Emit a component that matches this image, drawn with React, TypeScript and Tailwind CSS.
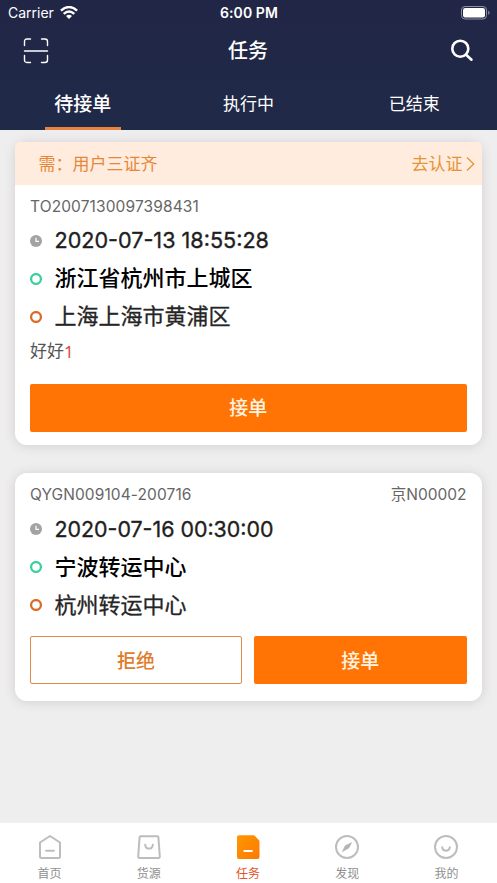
import React from 'react';

const ScanIcon = () => (
  <svg width="26" height="26" viewBox="0 0 26 26" fill="none" stroke="#fff" strokeWidth="1.4" strokeLinecap="round">
    <path d="M1.500 7.500V3.500Q1.500 1 4 1H7.500M18.500 1h3.500Q24.500 1 24.500 3.500V7.500M24.500 17.500v4.500Q24.500 24.500 22 24.500H18.500M7.500 24.500H4Q1.500 24.500 1.500 22V17.500M1.500 13h23" />
  </svg>
);

const SearchIcon = () => (
  <svg width="24" height="24" viewBox="0 0 24 24" fill="none" stroke="#fff" strokeWidth="2.6" strokeLinecap="round">
    <circle cx="10.300" cy="9.700" r="8" />
    <path d="M16.100 15.800L21.500 20.700" />
  </svg>
);

const WifiIcon = () => (
  <svg width="18" height="14" viewBox="0 0 18 14" fill="none" stroke="#fff" strokeWidth="2.400">
    <path d="M0.900 4.700Q9 -2.600 17.100 4.700M3.700 7.900Q9 3.200 14.300 7.900" />
    <path d="M9 13L6 10.100Q9 7.600 12 10.100Z" fill="#fff" stroke="none" />
  </svg>
);

const BatteryIcon = () => (
  <svg width="29" height="14" viewBox="0 0 29 14">
    <rect x="0.500" y="0.500" width="25" height="12.500" rx="3.500" fill="none" stroke="#8d90a4" />
    <rect x="2" y="2" width="22" height="9.500" rx="2.200" fill="#fff" />
    <path d="M27.200 4.800Q28.600 5.500 28.600 6.800Q28.600 8.100 27.200 8.800Z" fill="#8d90a4" />
  </svg>
);

const ClockIcon = () => (
  <svg width="12" height="12" viewBox="0 0 12 12">
    <circle cx="6" cy="6" r="6" fill="#a3a3a3" />
    <path d="M6 2.800V6.300H9" fill="none" stroke="#fff" strokeWidth="1.200" />
  </svg>
);

const Ring = ({ color }: { color: string }) => (
  <svg width="12" height="12" viewBox="0 0 12 12">
    <circle cx="6" cy="6" r="4.900" fill="none" stroke={color} strokeWidth="2.300" />
  </svg>
);

const HomeIcon = () => (
  <svg width="24" height="26" viewBox="0 0 24 26" fill="none" stroke="#bdbdbd" strokeWidth="2" strokeLinejoin="round" strokeLinecap="round">
    <path d="M2 8.500L12 2L22 8.500V22.500Q22 24 20.500 24H3.500Q2 24 2 22.500Z" />
    <path d="M8.200 16.800h7.600" />
  </svg>
);

const GoodsIcon = () => (
  <svg width="24" height="26" viewBox="0 0 24 26" fill="none" stroke="#bdbdbd" strokeWidth="2" strokeLinejoin="round" strokeLinecap="round">
    <path d="M3.500 2.300H20.500Q21.300 2.300 21.400 3.100L22.800 22.600Q22.900 24 21.500 24H2.500Q1.100 24 1.200 22.600L2.600 3.100Q2.700 2.300 3.500 2.300Z" />
    <path d="M8.200 10.800Q8.600 14.600 12 14.600T15.800 10.800" />
  </svg>
);

const TaskIcon = () => (
  <svg width="24" height="26" viewBox="0 0 24 26">
    <defs>
      <linearGradient id="task" x1="0" y1="0" x2="1" y2="1">
        <stop offset="0" stopColor="#ff9700" />
        <stop offset="1" stopColor="#fb7b04" />
      </linearGradient>
    </defs>
    <path d="M3 1.300H17.500Q18.300 1.300 19 2L22.800 5.900Q23.500 6.600 23.500 7.500V23Q23.500 25 21.500 25H3Q1 25 1 23V3.300Q1 1.300 3 1.300Z" fill="url(#task)" />
    <path d="M8.300 17h7.600" stroke="#fff" strokeWidth="1.900" strokeLinecap="round" />
  </svg>
);

const FindIcon = () => (
  <svg width="24" height="26" viewBox="0 0 24 26">
    <circle cx="12" cy="13" r="11" fill="none" stroke="#bdbdbd" strokeWidth="2" />
    <path d="M17.300 7.900L14 14.300L6.800 18.300L10 11.600Z" fill="#b5b5b5" />
  </svg>
);

const MineIcon = () => (
  <svg width="24" height="26" viewBox="0 0 24 26" fill="none" stroke="#bdbdbd" strokeWidth="2" strokeLinecap="round">
    <circle cx="12" cy="13" r="11" />
    <path d="M8.200 13.300Q8.800 16.800 12 16.800T15.800 13.300" />
  </svg>
);

const Row = ({ icon, className, children }: { icon: React.ReactNode; className: string; children: React.ReactNode }) => (
  <div className="flex h-[38px] items-center gap-[12.500px]">
    {icon}
    <span className={`whitespace-nowrap ${className}`}>{children}</span>
  </div>
);

const navItems = [
  { label: '首页', icon: <HomeIcon /> },
  { label: '货源', icon: <GoodsIcon /> },
  { label: '任务', icon: <TaskIcon />, active: true },
  { label: '发现', icon: <FindIcon /> },
  { label: '我的', icon: <MineIcon /> },
];

export default function App() {
  return (
    <div className="flex h-[883px] w-[497px] flex-col overflow-hidden bg-[#efeeef] font-['Inter','Noto_Sans_CJK_SC',sans-serif]">
      <header className="flex h-[129.500px] shrink-0 flex-col bg-linear-to-b from-[#222646] to-[#1f2a48] text-white">
        <div className="grid h-[25px] grid-cols-3 items-center pl-[8px] pr-[7px]">
          <div className="flex items-center gap-[6px] text-[14px]">
            <span>Carrier</span>
            <WifiIcon />
          </div>
          <div className="text-center text-[14px] font-semibold tracking-[0.100px]">6:00 PM</div>
          <div className="flex justify-end">
            <BatteryIcon />
          </div>
        </div>
        <div className="flex h-[51px] items-center justify-between px-[23px] pt-px">
          <ScanIcon />
          <h1 className="pr-[3px] text-[20px] font-medium leading-[50px]">任务</h1>
          <SearchIcon />
        </div>
        <nav className="grid h-[53.500px] grid-cols-3 text-center text-[17px] leading-[56px]">
          <div className="flex flex-col items-center">
            <span className="h-[51px] text-[19px] font-medium leading-[57px]">待接单</span>
            <span className="h-[3px] w-[76px] bg-[#e88440]" />
          </div>
          <span>执行中</span>
          <span>已结束</span>
        </nav>
      </header>

      <main className="flex flex-1 flex-col gap-[28px] px-[15px] pt-[12.500px]">
        <section className="h-[303px] w-[466.500px] rounded-[12px] bg-white shadow-[0_1px_12px_rgba(60,40,50,0.16)]">
          <div className="flex h-[42.500px] items-center justify-between rounded-t-[5px] bg-[#ffecdf] pl-[23.500px] pr-[7px] pt-[2px] text-[17px] text-[#e78736]">
            <span>需：用户三证齐</span>
            <span className="flex items-center gap-[3px] text-[#e39435]">
              去认证
              <svg width="9" height="15" viewBox="0 0 9 15" fill="none" stroke="#e39435" strokeWidth="1.300">
                <path d="M1 0.500L7.700 7L1 13.500" />
              </svg>
            </span>
          </div>
          <div className="px-[15px]">
            <div className="flex h-[37px] items-center pt-[7px] text-[15.500px] tracking-[0.120px] text-[#666]">TO2007130097398431</div>
            <Row icon={<ClockIcon />} className="text-[21.600px] text-[#1e1e1e] [-webkit-text-stroke:0.350px_#1e1e1e]">2020-07-13 18:55:28</Row>
            <Row icon={<Ring color="#3bcfa0" />} className="text-[22px] font-medium text-black">浙江省杭州市上城区</Row>
            <Row icon={<Ring color="#dd6a25" />} className="text-[22px] text-[#252525] [-webkit-text-stroke:0.300px_#252525]">上海上海市黄浦区</Row>
            <div className="flex h-[33px] items-center text-[17px] text-[#555]">
              好好<span className="font-['Noto_Sans',sans-serif] text-[#e04540]">1</span>
            </div>
            <button className="mt-[15px] block h-[48px] w-[436.500px] rounded-[2px] bg-[#ff7404] pt-[3px] text-[19px] font-medium leading-[28px] text-[#fff4e2]">接单</button>
          </div>
        </section>

        <section className="h-[228px] w-[466.500px] rounded-[12px] bg-white px-[15px] shadow-[0_1px_12px_rgba(60,40,50,0.16)]">
          <div className="flex h-[37px] items-center justify-between pt-[7px] text-[15.500px] text-[#666]">
            <span className="tracking-[0.100px]">QYGN009104-200716</span>
            <span>京N00002</span>
          </div>
          <Row icon={<ClockIcon />} className="text-[21.400px] text-[#1e1e1e] [-webkit-text-stroke:0.350px_#1e1e1e]">2020-07-16 00:30:00</Row>
          <Row icon={<Ring color="#3bcfa0" />} className="text-[22px] font-medium text-black">宁波转运中心</Row>
          <Row icon={<Ring color="#dd6a25" />} className="text-[22px] text-[#252525] [-webkit-text-stroke:0.300px_#252525]">杭州转运中心</Row>
          <div className="mt-[12px] grid w-[436.500px] grid-cols-2 gap-[12px] text-[19px] font-medium leading-[28px]">
            <button className="h-[48px] rounded-[2px] border-[1.500px] border-[#e28a4a] pt-[3px] text-[#e07c2c]">拒绝</button>
            <button className="h-[48px] rounded-[2px] bg-[#ff7404] pt-[3px] text-[#fff4e2]">接单</button>
          </div>
        </section>
      </main>

      <footer className="grid h-[60px] w-[496px] shrink-0 grid-cols-5 bg-white shadow-[1px_0_0_#fff]">
        {navItems.map((item) => (
          <div key={item.label} className="flex flex-col items-center pt-[11px]">
            {item.icon}
            <span className={`mt-[4px] text-[12px] leading-[20px] ${item.active ? 'text-[#e2562c]' : 'text-[#8f8f8f]'}`}>{item.label}</span>
          </div>
        ))}
      </footer>
    </div>
  );
}
